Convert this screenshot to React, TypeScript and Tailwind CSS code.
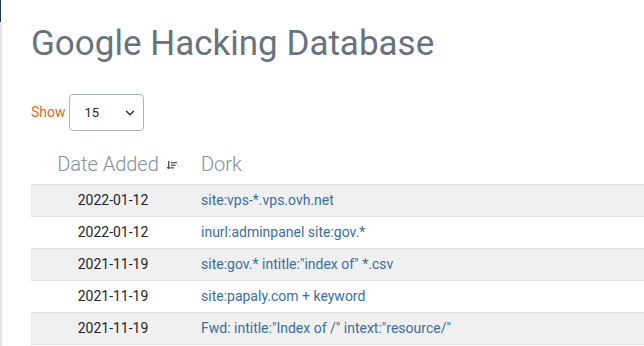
import { ChevronDown } from "lucide-react";

const rows = [
  { date: "2022-01-12", dork: "site:vps-*.vps.ovh.net" },
  { date: "2022-01-12", dork: "inurl:adminpanel site:gov.*" },
  { date: "2021-11-19", dork: 'site:gov.* intitle:"index of" *.csv' },
  { date: "2021-11-19", dork: "site:papaly.com + keyword" },
  { date: "2021-11-19", dork: 'Fwd: intitle:"Index of /" intext:"resource/"' },
];

function SortIcon() {
  return (
    <svg width="10" height="10" viewBox="0 0 10 10" className="ml-[8px] mt-[2px]">
      <rect x="1" y="1" width="1.4" height="8" fill="#555" />
      <rect x="0" y="7" width="3.4" height="1.4" fill="#555" />
      <rect x="4" y="2" width="6" height="1.3" fill="#555" />
      <rect x="4" y="4.6" width="4.5" height="1.3" fill="#555" />
      <rect x="4" y="7.2" width="3" height="1.3" fill="#555" />
    </svg>
  );
}

export default function App() {
  return (
    <div className="flex h-[346px] w-[644px] overflow-hidden bg-white font-['Roboto',sans-serif]">
      <div className="flex w-[2px] shrink-0 flex-col">
        <div className="h-[22px] w-[1px] bg-[#1c3553]" />
        <div className="flex-1 w-[2px] bg-[#e4e7eb]" />
      </div>
      <div className="flex-1 pl-[29px]">
        <h1 className="mt-[22px] text-[35px] leading-[44px] text-[#68737f]">
          Google Hacking Database
        </h1>
        <div className="mt-[28px] flex items-center">
          <span className="text-[14px] text-[#e0691d]">Show</span>
          <div className="ml-[3px] flex h-[37px] w-[75px] items-center justify-between rounded-[4px] border border-[#adb5bd] pl-[15px] pr-[6px]">
            <span className="text-[13px] text-[#212529]">15</span>
            <ChevronDown size={14} strokeWidth={2.5} className="text-[#333]" />
          </div>
        </div>
        <table className="mt-[16px] w-[620px] border-collapse text-[14px]">
          <thead>
            <tr className="h-[37px]">
              <th className="w-[164px] p-0 pb-[3px] font-light">
                <div className="flex items-center justify-center pl-[8px] text-[20px] text-[#868e96]">
                  Date Added
                  <SortIcon />
                </div>
              </th>
              <th className="p-0 pb-[3px] pl-[6px] text-left text-[20px] font-light text-[#868e96]">Dork</th>
            </tr>
          </thead>
          <tbody>
            {rows.map((r, i) => (
              <tr
                key={i}
                className={`h-[32px] border-t border-[#dee2e6] ${i % 2 === 0 ? "bg-[#f0f0f0]" : "bg-white"}`}
              >
                <td className="p-0 text-center text-[#212529]">{r.date}</td>
                <td className="p-0 pl-[6px] text-[#3c6da0]">{r.dork}</td>
              </tr>
            ))}
            <tr className="h-[4px] border-t border-[#dee2e6]">
              <td />
              <td />
            </tr>
          </tbody>
        </table>
      </div>
    </div>
  );
}
